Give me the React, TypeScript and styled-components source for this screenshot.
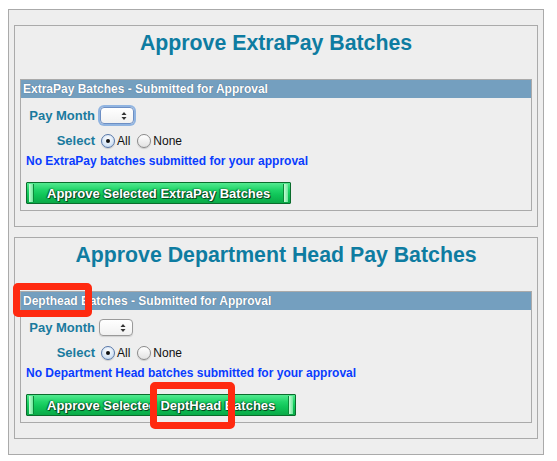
import React from "react";
import styled, { createGlobalStyle } from "styled-components";

const Global = createGlobalStyle`
  html, body { margin: 0; padding: 0; background: #ffffff; }
  body { font-family: "Liberation Sans", Arial, sans-serif; }
  * { box-sizing: border-box; }
`;

const Page = styled.div`
  position: relative;
  width: 557px;
  height: 461px;
  padding: 9px 0 0 8px;
`;

const Outer = styled.div`
  width: 536px;
  background: #eeeeee;
  border: 1px solid #aaaaaa;
  padding: 15px 5px 15px 5px;
  display: flex;
  flex-direction: column;
  gap: 10px;
`;

const Section = styled.section`
  border: 1px solid #aaaaaa;
  background: #eeeeee;
  padding: 5px 5px 15px 5px;
`;

const Title = styled.h2`
  margin: 0 0 24px 0;
  font-size: 21.3px;
  line-height: 24px;
  font-weight: bold;
  color: #0e7ca1;
  text-align: center;
`;

const Table = styled.div`
  border: 1px solid #aaaaaa;
`;

const HeaderBar = styled.div`
  background: #749fbf;
  height: 18px;
  line-height: 18px;
  padding-left: 2px;
  color: #ffffff;
  font-size: 12px;
  font-weight: bold;
  text-shadow: 0 0 1px rgba(40, 60, 90, 0.7);
  white-space: nowrap;
`;

const Body = styled.div<{ $top: number }>`
  padding: ${(p) => p.$top}px 5px 6px 5px;
  display: flex;
  flex-direction: column;
`;

const FormGrid = styled.div`
  display: grid;
  grid-template-columns: 67px 1fr;
  column-gap: 4px;
  row-gap: 6px;
  margin-left: 2px;
`;

const Label = styled.span`
  justify-self: end;
  font-size: 13px;
  line-height: 19px;
  font-weight: bold;
  color: #1a7a9e;
  white-space: nowrap;
`;

const Controls = styled.div`
  display: flex;
  align-items: center;
  height: 19px;
`;

const SelectBox = styled.div<{ $focus?: boolean }>`
  position: relative;
  width: 34px;
  height: 17px;
  border: 1px solid ${(p) => (p.$focus ? "#6d8fc4" : "#9a9a9a")};
  border-radius: 4px;
  background: linear-gradient(#ffffff, #f1f1f1);
  box-shadow: ${(p) =>
    p.$focus ? "0 0 0 2px rgba(112, 160, 220, 0.75)" : "0 1px 1px rgba(0,0,0,0.12)"};
  margin-left: ${(p) => (p.$focus ? "1px" : "0")};
`;

const Arrows = styled.svg`
  position: absolute;
  right: 6px;
  top: 3px;
`;

const RadioLabel = styled.label`
  display: inline-flex;
  align-items: center;
  font-size: 12px;
  color: #111111;
  margin-right: 5px;
  cursor: default;
`;

const Radio = styled.span<{ $checked?: boolean }>`
  position: relative;
  display: inline-block;
  width: 14px;
  height: 14px;
  border-radius: 50%;
  margin: 0 2px 0 2px;
  border: 1px solid ${(p) => (p.$checked ? "#5877a8" : "#8a8a8a")};
  background: ${(p) =>
    p.$checked
      ? "radial-gradient(circle at 50% 35%, #ffffff, #c9dcf2 80%)"
      : "linear-gradient(#ffffff, #e2e2e2)"};
  box-shadow: 0 1px 1px rgba(0, 0, 0, 0.15);
  &::after {
    content: "";
    display: ${(p) => (p.$checked ? "block" : "none")};
    position: absolute;
    width: 4px;
    height: 4px;
    border-radius: 50%;
    background: #111111;
    left: 4px;
    top: 4px;
  }
`;

const Message = styled.div`
  margin-top: 3px;
  font-size: 12px;
  line-height: 16px;
  font-weight: bold;
  color: #0a3cff;
  white-space: nowrap;
`;

const GreenButton = styled.button`
  position: relative;
  align-self: flex-start;
  margin-top: 13px;
  height: 22px;
  padding: 0 20px 0 20px;
  border: 1px solid #0a6c2c;
  border-radius: 1px;
  background: linear-gradient(#52ea8f 0%, #1fd468 35%, #0fc558 60%, #0aa947 100%);
  color: #ffffff;
  font-family: "Liberation Sans", Arial, sans-serif;
  font-size: 13px;
  font-weight: bold;
  text-shadow: 1px 1px 0 #064a1e, -1px 0 1px #0a5a26, 0 0 2px #064a1e;
  white-space: nowrap;
  cursor: pointer;
  &::before,
  &::after {
    content: "";
    position: absolute;
    top: 1px;
    bottom: 1px;
    width: 4px;
    background: linear-gradient(to right, #c4fbd4, #6ee79b);
  }
  &::before {
    left: 2px;
    border-right: 1px solid #0b8a3a;
  }
  &::after {
    right: 2px;
    border-left: 1px solid #0b8a3a;
  }
`;

const Annotation = styled.div`
  position: absolute;
  border: 7px solid #ff2a10;
  border-radius: 5px;
  pointer-events: none;
`;

const ArrowIcon = () => (
  <Arrows width="6" height="10" viewBox="0 0 6 10">
    <path d="M3 1 L5.5 4 L0.5 4 Z" fill="#333" />
    <path d="M3 9 L5.5 6 L0.5 6 Z" fill="#333" />
  </Arrows>
);

type BatchProps = {
  title: string;
  header: string;
  message: string;
  button: string;
  focus?: boolean;
  top: number;
};

const BatchSection: React.FC<BatchProps> = ({ title, header, message, button, focus, top }) => (
  <Section>
    <Title>{title}</Title>
    <Table>
      <HeaderBar>{header}</HeaderBar>
      <Body $top={top}>
        <FormGrid>
          <Label>Pay Month</Label>
          <Controls>
            <SelectBox $focus={focus}>
              <ArrowIcon />
            </SelectBox>
          </Controls>
          <Label>Select</Label>
          <Controls>
            <RadioLabel>
              <Radio $checked />
              All
            </RadioLabel>
            <RadioLabel>
              <Radio />
              None
            </RadioLabel>
          </Controls>
        </FormGrid>
        <Message>{message}</Message>
        <GreenButton type="button">{button}</GreenButton>
      </Body>
    </Table>
  </Section>
);

export default function App() {
  return (
    <>
      <Global />
      <Page>
        <Outer>
          <BatchSection
            title="Approve ExtraPay Batches"
            header="ExtraPay Batches - Submitted for Approval"
            message="No ExtraPay batches submitted for your approval"
            button="Approve Selected ExtraPay Batches"
            focus
            top={8}
          />
          <BatchSection
            title="Approve Department Head Pay Batches"
            header="Depthead Batches - Submitted for Approval"
            message="No Department Head batches submitted for your approval"
            button="Approve Selected DeptHead Batches"
            top={8}
          />
        </Outer>
        <Annotation style={{ left: 13, top: 283, width: 79, height: 34 }} />
        <Annotation style={{ left: 150, top: 382, width: 85, height: 47 }} />
      </Page>
    </>
  );
}
